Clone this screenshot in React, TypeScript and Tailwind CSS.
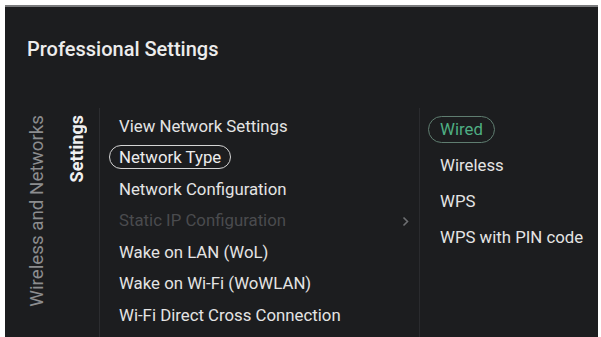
import React from "react";

const items = [
  { t: "View Network Settings" },
  { t: "Network Type", sel: true },
  { t: "Network Configuration" },
  { t: "Static IP Configuration", dim: true, chevron: true },
  { t: "Wake on LAN (WoL)" },
  { t: "Wake on Wi-Fi (WoWLAN)" },
  { t: "Wi-Fi Direct Cross Connection" },
];

const opts = ["Wired", "Wireless", "WPS", "WPS with PIN code"];

export default function App() {
  return (
    <div
      className="w-[601px] h-[337px] bg-white pt-[5px] pl-[5px] pr-[3px] overflow-hidden"
      style={{ fontFamily: "Roboto, 'Open Sans', sans-serif" }}
    >
      <div className="w-full h-full bg-[#1c1d1f] border-t-2 border-[#7a7b7d] flex flex-col">
        <div className="h-[101px] pl-[22px] pt-[30px] text-[20px] leading-[24px] font-medium text-[#ececec]">
          Professional Settings
        </div>
        <div className="flex-1 flex">
          <div className="w-[50px] flex justify-end items-start pr-[8px] pt-[7px]">
            <div className="[writing-mode:vertical-rl] rotate-180 text-[18.8px] leading-[20px] text-[#8c8d8f]">
              Wireless and Networks
            </div>
          </div>
          <div className="w-[45px] flex justify-center items-start pt-[7px] border-r border-[#2c2d30]">
            <div className="[writing-mode:vertical-rl] rotate-180 text-[18px] leading-[20px] font-bold text-[#f0f0f0]">
              Settings
            </div>
          </div>
          <div className="w-[320px] border-r border-[#2a2b2e] pt-[2px]">
            {items.map((it) => (
              <div key={it.t} className="h-[31.5px] flex items-center relative pl-[9px]">
                <span
                  className={
                    "text-[16.8px] leading-[20px] px-[9px] py-[1px] rounded-full border-[1.5px] " +
                    (it.sel
                      ? "border-[#d4d4d4] text-[#ececec]"
                      : it.dim
                      ? "border-transparent text-[#4a4b4e]"
                      : "border-transparent text-[#e4e4e4]")
                  }
                >
                  {it.t}
                </span>
                {it.chevron && (
                  <svg
                    className="absolute left-[302px] top-[11px]"
                    width="7"
                    height="11"
                    viewBox="0 0 7 11"
                  >
                    <path d="M1.5 1.5 L5.5 5.5 L1.5 9.5" stroke="#6e6f72" strokeWidth="1.6" fill="none" />
                  </svg>
                )}
              </div>
            ))}
          </div>
          <div className="flex-1 pt-[3px] pl-[8px]">
            {opts.map((o, i) => (
              <div key={o} className="h-[36px] flex items-center">
                <span
                  className={
                    "text-[16.8px] leading-[20px] px-[11px] py-[2.5px] rounded-full border-[1.5px] " +
                    (i === 0 ? "border-[#5f7d70] text-[#4fae83]" : "border-transparent text-[#e4e4e4]")
                  }
                >
                  {o}
                </span>
              </div>
            ))}
          </div>
        </div>
      </div>
    </div>
  );
}
